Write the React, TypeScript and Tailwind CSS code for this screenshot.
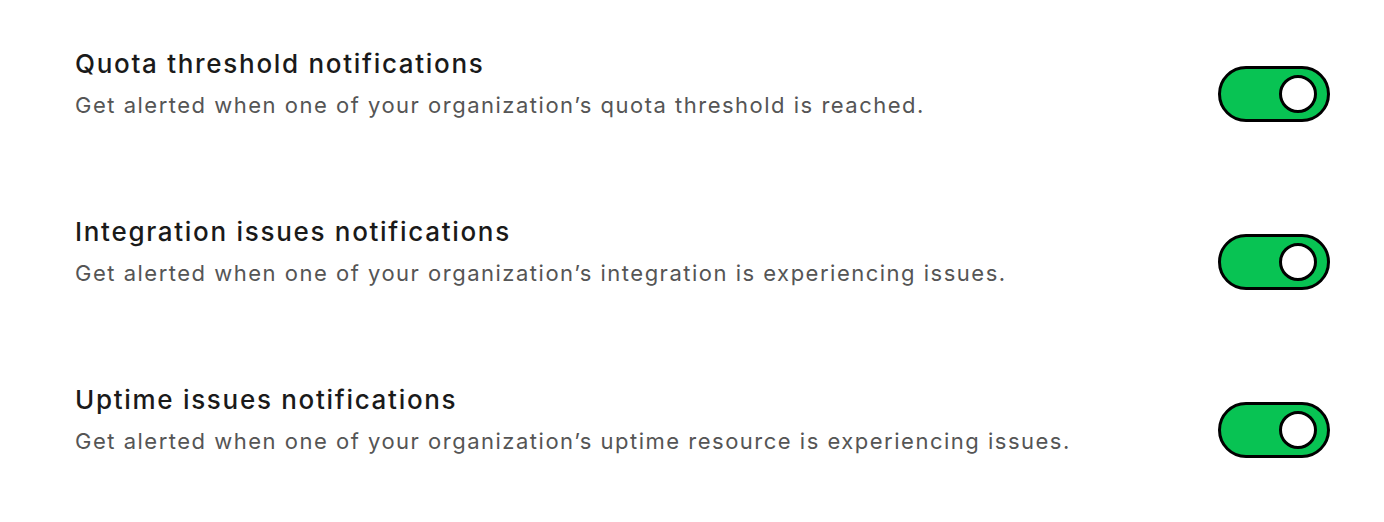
import type { FC } from 'react';

const rows = [
  {
    title: 'Quota threshold notifications',
    desc: 'Get alerted when one of your organization\u2019s quota threshold is reached.',
  },
  {
    title: 'Integration issues notifications',
    desc: 'Get alerted when one of your organization\u2019s integration is experiencing issues.',
  },
  {
    title: 'Uptime issues notifications',
    desc: 'Get alerted when one of your organization\u2019s uptime resource is experiencing issues.',
  },
];

const Toggle: FC = () => (
  <div className="flex h-[56px] w-[112px] items-center justify-end rounded-full border-[3px] border-black bg-[#08c353] pr-[10px]">
    <div className="h-[38px] w-[38px] rounded-full border-[3px] border-black bg-white" />
  </div>
);

export default function App() {
  return (
    <div className="min-h-[522px] bg-white pt-[10px] pl-[75px] pr-[54px] font-['Inter',sans-serif]">
      {rows.map((r) => (
        <div key={r.title} className="flex h-[168px] items-center justify-between">
          <div className="-mt-[23px] flex flex-col">
            <h3 className="text-[26px] font-medium leading-[36px] tracking-[1.7px] text-[#1a1a1a]">{r.title}</h3>
            <p className="mt-[8px] text-[22px] leading-[30px] tracking-[1.5px] text-[#555555]">{r.desc}</p>
          </div>
          <Toggle />
        </div>
      ))}
    </div>
  );
}
